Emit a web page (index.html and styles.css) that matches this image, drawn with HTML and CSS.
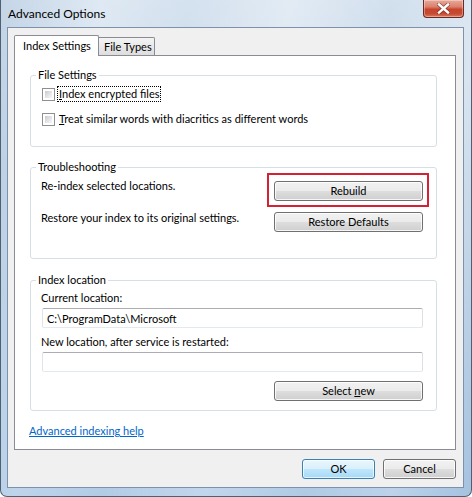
FILE: index.html
```
<!DOCTYPE html>
<html>
<head>
<meta charset="utf-8">
<title>Advanced Options</title>
<link rel="stylesheet" href="styles.css">
</head>
<body>
<div class="window">
  <div class="titlebar">
    <span class="title">Advanced Options</span>
    <div class="close-btn">
      <svg width="13" height="11" viewBox="0 0 13 11">
        <path d="M2 1.5 L11 9.5 M11 1.5 L2 9.5" stroke="#5b2219" stroke-width="4" stroke-linecap="square" fill="none" opacity="0.55"/>
        <path d="M2 1.5 L11 9.5 M11 1.5 L2 9.5" stroke="#ffffff" stroke-width="2.4" stroke-linecap="square" fill="none"/>
      </svg>
    </div>
  </div>
  <div class="client">
    <div class="tabstrip">
      <div class="tab tab-active">Index Settings</div>
      <div class="tab tab-inactive">File Types</div>
    </div>
    <div class="panel">
      <fieldset class="group group-file">
        <legend>File Settings</legend>
        <div class="check-row">
          <span class="checkbox"></span>
          <span class="check-label focused"><u>I</u>ndex encrypted files</span>
        </div>
        <div class="check-row">
          <span class="checkbox"></span>
          <span class="check-label"><u>T</u>reat similar words with diacritics as different words</span>
        </div>
      </fieldset>

      <fieldset class="group group-trouble">
        <legend>Troubleshooting</legend>
        <div class="action-row row-first">
          <span class="action-text">Re-index selected locations.</span>
          <button class="btn btn-action btn-highlight">Rebuild</button>
        </div>
        <div class="action-row row-second">
          <span class="action-text">Restore your index to its original settings.</span>
          <button class="btn btn-action">Restore Defaults</button>
        </div>
      </fieldset>

      <fieldset class="group group-location">
        <legend>Index location</legend>
        <div class="field-label">Current location:</div>
        <input class="textbox" type="text" value="C:\ProgramData\Microsoft">
        <div class="field-label label-second">New location, after service is restarted:</div>
        <input class="textbox" type="text" value="">
        <div class="select-row">
          <button class="btn btn-action">Select <u>n</u>ew</button>
        </div>
      </fieldset>

      <a class="help-link" href="#">Advanced indexing help</a>
    </div>
    <div class="footer">
      <button class="btn btn-dialog btn-default">OK</button>
      <button class="btn btn-dialog">Cancel</button>
    </div>
  </div>
</div>
</body>
</html>
```
FILE: styles.css
```
html, body {
  margin: 0;
  padding: 0;
}

body {
  width: 472px;
  height: 497px;
  overflow: hidden;
  font-family: Lato, "Noto Sans", sans-serif;
  font-size: 11px;
  color: #000;
  background: #ffffff;
}

.window {
  box-sizing: border-box;
  width: 472px;
  height: 497px;
  display: flex;
  flex-direction: column;
  padding: 0 7px 8px 6px;
  border: 1px solid #4f6073;
  border-top: none;
  border-radius: 0 0 7px 7px;
  background:
    linear-gradient(180deg, rgba(255,255,255,0.25) 0%, rgba(255,255,255,0) 40%, rgba(120,170,220,0.25) 100%),
    linear-gradient(100deg, #b2c8df 0%, #d4e2ef 18%, #c6d7e9 34%, #d9e5f1 52%, #c3d5e8 70%, #d2e0ee 86%, #b4cae1 100%);
}

.titlebar {
  height: 27px;
  display: flex;
  align-items: flex-start;
}

.title {
  padding-left: 1px;
  margin-top: 6px;
  line-height: 16px;
  font-size: 12px;
  color: #000;
}

.close-btn {
  margin-left: auto;
  box-sizing: border-box;
  width: 41px;
  height: 18px;
  border: 1px solid #6a2a20;
  border-top: none;
  border-radius: 0 0 4px 4px;
  background: linear-gradient(180deg, #e8a99a 0%, #dc806c 40%, #c8432c 55%, #c64a32 80%, #d8795f 100%);
  box-shadow: inset 0 0 0 1px rgba(255,255,255,0.35);
  display: flex;
  align-items: center;
  justify-content: center;
}

.close-btn svg {
  display: block;
  margin-top: -1px;
}

.client {
  flex: 1;
  display: flex;
  flex-direction: column;
  border: 1px solid #7d91aa;
  background: #f0f0f0;
  padding: 7px 7px 0 6px;
  min-height: 0;
}

.tabstrip {
  height: 21px;
  display: flex;
  align-items: flex-start;
  flex: none;
}

.tab {
  box-sizing: border-box;
  border: 1px solid #898c95;
  border-bottom: none;
  line-height: 14px;
  white-space: nowrap;
}

.tab-active {
  position: relative;
  z-index: 1;
  width: 85px;
  height: 21px;
  padding: 3px 0 0 8px;
  background: #ffffff;
  border-radius: 2px 2px 0 0;
}

.tab-inactive {
  width: 56px;
  height: 18px;
  margin-top: 2px;
  padding: 2px 0 0 5px;
  background: linear-gradient(180deg, #f3f3f3 0%, #e9e9e9 50%, #dddddd 100%);
  border-left: none;
  border-radius: 0 2px 0 0;
}

.panel {
  flex: 1;
  margin-top: -1px;
  border: 1px solid #898c95;
  background: #ffffff;
  padding: 12px 18px 0 15px;
  display: flex;
  flex-direction: column;
  min-height: 0;
}

.group {
  margin: 0;
  min-width: 0;
  border: 1px solid #d5dfe5;
  border-radius: 3px;
  padding: 4px 13px 19px 10px;
}

.group legend {
  padding: 0 2px;
  margin-left: -5px;
  line-height: 14px;
  font-size: 11px;
}

.group-trouble {
  margin-top: 13px;
  padding-top: 5px;
  padding-bottom: 26px;
}

.group-location {
  margin-top: 14px;
  padding-top: 4px;
  padding-bottom: 9px;
}

.check-row {
  display: flex;
  align-items: center;
  height: 16px;
}

.check-row + .check-row {
  margin-top: 9px;
}

.checkbox {
  box-sizing: content-box;
  width: 7px;
  height: 7px;
  padding: 2px;
  margin-left: 1px;
  border: 1px solid #8f8f8f;
  background: linear-gradient(135deg, #c6c9ce 0%, #e4e5e7 55%, #f7f7f7 100%) content-box, #ffffff;
  flex: none;
}

.check-label {
  margin-left: 2px;
  padding: 0 1px;
  border: 1px dotted transparent;
  line-height: 14px;
  white-space: nowrap;
}

.check-label.focused {
  border-color: #000;
}

.action-row {
  display: grid;
  grid-template-columns: 1fr 149px;
  align-items: start;
}

.action-text {
  line-height: 14px;
  white-space: nowrap;
}

.row-first .btn {
  margin-top: 2px;
}

.row-second {
  margin-top: 10px;
}

.row-second .btn {
  margin-top: 1px;
}

.btn {
  box-sizing: border-box;
  height: 20px;
  padding: 0;
  margin: 0;
  font-family: Lato, "Noto Sans", sans-serif;
  font-size: 11px;
  line-height: 18px;
  color: #000;
  border: 1px solid #707070;
  border-radius: 3px;
  background: linear-gradient(180deg, #f2f2f2 0%, #ebebeb 48%, #dddddd 52%, #cfcfcf 100%);
  box-shadow: inset 0 0 0 1px rgba(255,255,255,0.8);
}

.btn-action {
  width: 149px;
}

.btn-highlight {
  position: relative;
}

.btn-highlight::after {
  content: "";
  position: absolute;
  top: -9px;
  right: -7px;
  bottom: -7px;
  left: -8px;
  border: 2px solid #d42232;
  pointer-events: none;
}

.field-label {
  line-height: 14px;
}

.label-second {
  margin-top: 7px;
}

.textbox {
  display: block;
  box-sizing: border-box;
  width: 381px;
  height: 20px;
  margin: 3px 0 0 1px;
  padding: 0 4px;
  font-family: Lato, "Noto Sans", sans-serif;
  font-size: 11px;
  color: #000;
  border: 1px solid;
  border-color: #abadb3 #dbdfe6 #e3e9ef #e2e3ea;
  border-radius: 2px;
  background: #fff;
  outline: none;
}

.select-row {
  display: flex;
  justify-content: flex-end;
  margin-top: 9px;
}

.help-link {
  margin-top: 13px;
  margin-left: -1px;
  align-self: flex-start;
  line-height: 14px;
  color: #0066cc;
  text-decoration: underline;
}

.footer {
  flex: none;
  box-sizing: border-box;
  height: 37px;
  padding-top: 9px;
  display: flex;
  justify-content: flex-end;
  gap: 8px;
}

.btn-dialog {
  width: 73px;
}

.btn-default {
  border-color: #3c7fb1;
  background: linear-gradient(180deg, #eaf6fd 0%, #d9f0fc 48%, #bee6fd 52%, #a7d9f5 100%);
  box-shadow: inset 0 0 0 1px rgba(255,255,255,0.7);
}
```
